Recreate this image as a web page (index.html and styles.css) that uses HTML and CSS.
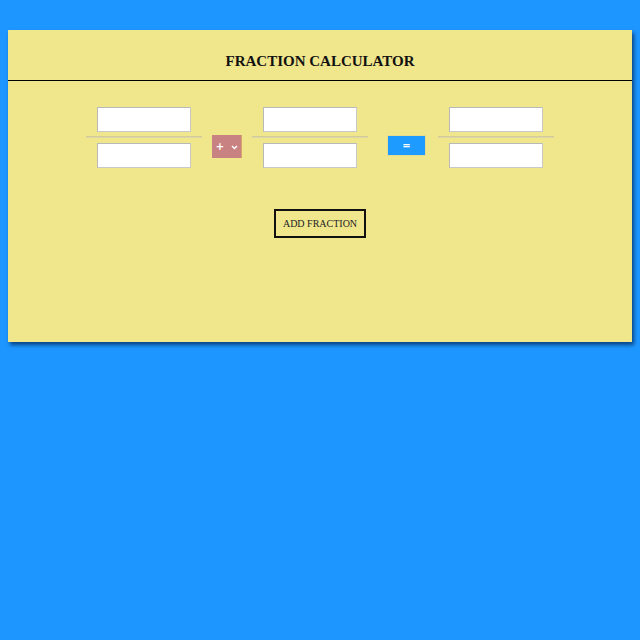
FILE: index.html
```html
<!DOCTYPE html>
<html>
<head>
<meta charset="utf-8">
<link rel="stylesheet" href="styles.css">
</head>
<body>
<div class="card">
  <div class="header"><h1 class="title">FRACTION CALCULATOR</h1></div>
  <div class="calc">
    <div class="fraction">
      <input class="num" type="text">
      <div class="bar"></div>
      <input class="num" type="text">
    </div>
    <div class="op"><span>+</span><svg width="7" height="5" viewBox="0 0 7 5"><path d="M1 1 L3.5 3.5 L6 1" stroke="#fff" stroke-width="1.4" fill="none"/></svg></div>
    <div class="fraction">
      <input class="num" type="text">
      <div class="bar"></div>
      <input class="num" type="text">
    </div>
    <button class="eq">=</button>
    <div class="fraction">
      <input class="num" type="text">
      <div class="bar"></div>
      <input class="num" type="text">
    </div>
  </div>
  <div class="actions"><button class="add">ADD FRACTION</button></div>
</div>
</body>
</html>
```
FILE: styles.css
```css
html, body { margin: 0; padding: 0; }
body {
  background: #1e96ff;
  font-family: "Liberation Serif", "Times New Roman", serif;
  width: 640px;
  height: 640px;
  padding-top: 30px;
  box-sizing: border-box;
}
.card {
  margin: 0 8px;
  height: 312px;
  background: #f0e68c;
  box-shadow: 2px 3px 4px rgba(0, 40, 90, 0.75);
  box-sizing: border-box;
}
.header {
  height: 51px;
  border-bottom: 1px solid #000;
  box-sizing: border-box;
  padding-top: 23px;
}
.title {
  margin: 0;
  text-align: center;
  font-size: 15px;
  line-height: 17px;
  font-weight: bold;
  color: #111;
}
.calc {
  display: flex;
  justify-content: center;
  align-items: flex-start;
  padding-top: 26px;
}
.fraction {
  width: 116px;
  display: flex;
  flex-direction: column;
  align-items: center;
}
.num {
  width: 94px;
  height: 25px;
  box-sizing: border-box;
  border: 1px solid #b9b9b9;
  border-bottom-color: #c8c8c8;
  border-right-color: #c8c8c8;
  background: #fff;
  margin: 0;
  padding: 0;
}
.bar {
  width: 116px;
  height: 2px;
  background: #ddd6a8;
  border-top: 1px solid #d4cc98;
  box-sizing: border-box;
  margin: 4px 0 5px;
}
.op {
  width: 30px;
  height: 23px;
  margin: 28px 10px 0 10px;
  background: #c88282;
  border-right: 1px solid #d9a36e;
  box-sizing: border-box;
  display: flex;
  align-items: center;
  justify-content: center;
  gap: 7px;
  color: #fff;
  font-family: "DejaVu Sans", sans-serif;
  font-size: 10px;
  font-weight: bold;
  padding-left: 1px;
}
.op svg { display: block; margin-top: 1px; }
.eq {
  width: 39px;
  height: 21px;
  margin: 28px 12px 0 19px;
  padding: 0;
  background: #1e9bff;
  border: 1px solid #e6dc90;
  color: #fff;
  font-family: "DejaVu Sans", sans-serif;
  font-size: 10px;
  font-weight: bold;
  line-height: 18px;
}
.actions {
  display: flex;
  justify-content: center;
  padding-top: 41px;
}
.add {
  width: 92px;
  height: 29px;
  box-sizing: border-box;
  border: 2px solid #111;
  background: #f0e68c;
  font-family: "Liberation Serif", "Times New Roman", serif;
  font-size: 10px;
  color: #222;
  padding: 0;
  margin: 0;
}
```
